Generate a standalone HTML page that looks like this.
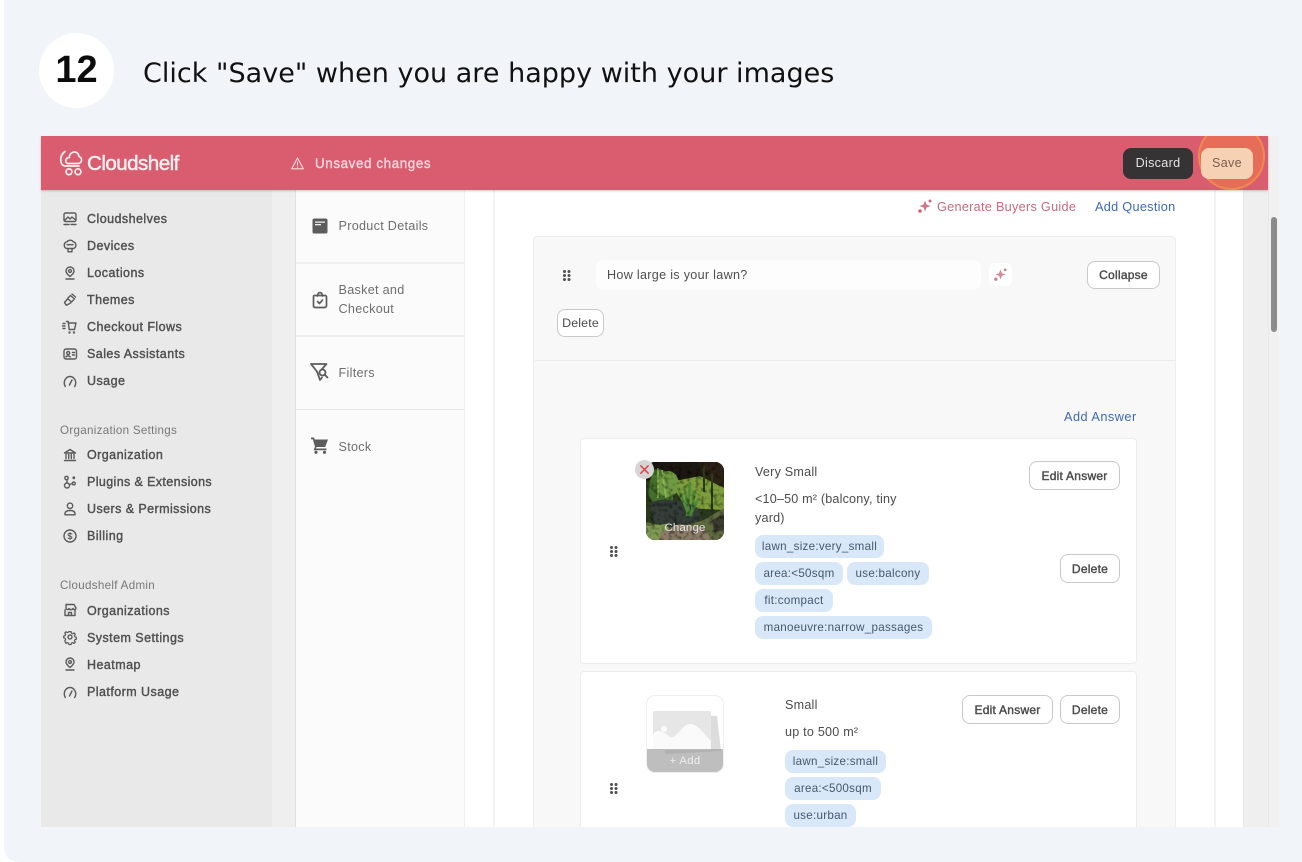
<!DOCTYPE html>
<html><head><meta charset="utf-8"><style>
*{box-sizing:border-box}
html,body{margin:0;padding:0;width:1302px;height:862px;overflow:hidden;background:#fff;font-family:"Liberation Sans",sans-serif}
.a{position:absolute}
.t{position:absolute;white-space:nowrap;font-size:12.6px;line-height:16px;letter-spacing:.25px;color:#4a4a4a}
.nav{font-weight:400;color:#505050;font-size:12.5px;letter-spacing:.45px;left:87px;-webkit-text-stroke:.4px #505050}
.lab{left:60px;color:#777;font-size:11.6px;letter-spacing:.3px}
.sub{left:338.5px;color:#6e6e6e;font-size:12.6px;letter-spacing:.3px}
.btn{position:absolute;background:#fff;border:1px solid #c9c9c9;border-radius:8px;font-size:12px;font-weight:400;-webkit-text-stroke:.4px #4a4a4a;color:#4a4a4a;text-align:center;letter-spacing:.25px}
.tag{position:absolute;height:23px;background:#d8e8f8;border-radius:8px;font-size:11.6px;line-height:24px;color:#46586e;text-align:center;letter-spacing:.28px;white-space:nowrap}
svg{position:absolute;overflow:visible}
.ic{fill:none;stroke:#5a5a5a;stroke-width:1.4;stroke-linecap:round;stroke-linejoin:round}
.dots{position:absolute;width:8px;height:11px;background-image:radial-gradient(circle at 1.5px 1.5px,#555 1.4px,transparent 1.7px);background-size:4.5px 4px}
#w{position:absolute;left:0;top:0;width:1302px;height:862px;filter:blur(.35px)}
</style></head><body>
<div class="a" style="left:4px;top:-12px;width:1310px;height:874px;background:#f1f5fa;border-radius:14px"></div>

<div class="a" style="left:39px;top:33px;width:75px;height:75px;border-radius:50%;background:#fff"></div>
<div class="t" style="left:39px;width:75px;text-align:center;top:47px;font-weight:700;font-size:38px;line-height:46px;color:#0c0c0c;letter-spacing:0">12</div>
<div class="t" style="left:143px;top:55px;font-family:'DejaVu Sans',sans-serif;font-size:27px;line-height:38px;color:#111;letter-spacing:.02px">Click "Save" when you are happy with your images</div>

<div id="w">
<!-- app frame -->
<div class="a" style="left:41px;top:190px;width:231px;height:637px;background:#e9e9e9"></div>
<div class="a" style="left:272px;top:190px;width:23px;height:637px;background:#efefef"></div>
<div class="a" style="left:295px;top:190px;width:170px;height:637px;background:#fbfbfb;border-left:1px solid #e2e2e2;border-right:1px solid #f0f0f0"></div>
<div class="a" style="left:465px;top:190px;width:28px;height:637px;background:#fff"></div>
<div class="a" style="left:493px;top:190px;width:723px;height:637px;background:#fff;border-left:2px solid #f3f3f3;border-right:2px solid #f3f3f3"></div>
<div class="a" style="left:1216px;top:190px;width:27px;height:637px;background:#fff"></div>
<div class="a" style="left:1243px;top:190px;width:25px;height:637px;background:#efefef;border-left:1px solid #e8e8e8"></div>
<div class="a" style="left:1268px;top:136px;width:11px;height:691px;background:#f1f1f1;border-left:1px solid #e8e8e8"></div>
<div class="a" style="left:1271px;top:217px;width:6px;height:115px;border-radius:3px;background:#8c8c8c"></div>

<!-- header -->
<div class="a" style="left:41px;top:136px;width:1227px;height:54px;background:#d95c6f;box-shadow:0 1px 2px rgba(120,60,70,.3)"></div>
<svg style="left:60px;top:150px" width="24" height="26" viewBox="0 0 24 26" fill="none" stroke="#fbeef0" stroke-width="1.7" stroke-linecap="round" stroke-linejoin="round">
<path d="M5 1.500C1.500 4 .2 8 1 12c.5 2.400 2 3.800 4 4h14"/>
<path d="M7.500 13.500h10.500c4 0 5-5.500 1-7C18.500 3 15.500 1 12.500 2.500 10 3.500 9 6 9.500 7.500 5.500 7.500 4.500 12.500 7.500 13.500Z"/>
<circle cx="9" cy="21.800" r="2.900"/><circle cx="18" cy="21.800" r="2.900"/></svg>
<div class="t" style="left:87px;top:151px;font-size:20.6px;line-height:26px;color:#fbf0f1;font-weight:400;letter-spacing:-.55px;-webkit-text-stroke:.45px #fbf0f1">Cloudshelf</div>
<svg style="left:291px;top:157px" width="13" height="13" viewBox="0 0 13 13" fill="none" stroke="#f7dde0" stroke-width="1.100" stroke-linejoin="round" stroke-linecap="round"><path d="M6.500 1 12.300 11.800H.7ZM6.500 5v3.300M6.500 10v.2"/></svg>
<div class="t" style="left:315px;top:156px;color:#f5d5da;font-weight:400;-webkit-text-stroke:.4px #f5d5da;font-size:13.4px;letter-spacing:.6px">Unsaved changes</div>
<div class="a" style="left:1123px;top:148px;width:70px;height:31px;border-radius:8px;background:#353333;color:#e4e4e4;font-size:12.6px;line-height:31px;text-align:center;letter-spacing:.3px">Discard</div>
<div class="a" style="left:1196px;top:136px;width:72px;height:55px;overflow:hidden"><div class="a" style="left:2px;top:-13px;width:67px;height:67px;border-radius:50%;background:#e76d58;border:2px solid #ee8a50"></div></div>
<div class="a" style="left:1201px;top:148px;width:52px;height:31px;border-radius:8px;background:#f7d1b3;color:#7b5f4c;font-size:12.6px;line-height:31px;text-align:center;letter-spacing:.3px">Save</div>

<!-- sidebar -->
<svg class="ic" style="left:63px;top:212px" width="14" height="14" viewBox="0 0 14 14"><rect x="1" y="1" width="12" height="8.500" rx="1.500"/><path d="M2 8l3-3 2 2 2-2 3 2.500M1 12.500h5M8 12.500h5"/></svg>
<div class="t nav" style="top:211px">Cloudshelves</div>
<svg class="ic" style="left:63px;top:239px" width="14" height="14" viewBox="0 0 14 14"><path d="M3.500 9.500C.5 8.500.3 3.500 4 2.800 5.500.7 9 .7 10.200 2.800c3.600.7 3.400 5.700.4 6.700ZM4 5.500c1 1 2 0 3 0s2 1 3 0M5 9.500v3.300h4V9.500"/></svg>
<div class="t nav" style="top:238px">Devices</div>
<svg class="ic" style="left:63px;top:266px" width="14" height="14" viewBox="0 0 14 14"><path d="M7 10.500C4.500 8.500 3 6.800 3 5a4 4 0 0 1 8 0c0 1.800-1.500 3.500-4 5.500ZM3 13h8"/><circle cx="7" cy="5" r="1.400"/></svg>
<div class="t nav" style="top:265px">Locations</div>
<svg class="ic" style="left:63px;top:293px" width="14" height="14" viewBox="0 0 14 14"><path d="M7.500 2.500l4 3.500-3 3-4-3.500ZM4.500 6l-3 3.500 1.800 2.700 3.500-1.700 1.700-1.500M9 1l3.500 3"/></svg>
<div class="t nav" style="top:292px">Themes</div>
<svg class="ic" style="left:62px;top:320px" width="15" height="14" viewBox="0 0 15 14"><path d="M4.500 1.500h1.700l1 8h5.300l1.500-6.500H6.500M1 3.500h2M.5 6h2.500M1 8.500h2"/><circle cx="7.500" cy="12.500" r=".5"/><circle cx="12" cy="12.500" r=".5"/></svg>
<div class="t nav" style="top:319px">Checkout Flows</div>
<svg class="ic" style="left:63px;top:347px" width="14" height="14" viewBox="0 0 14 14"><rect x="1" y="2" width="12.500" height="10" rx="2"/><circle cx="5.200" cy="6" r="1.500"/><path d="M3 10c.5-1.500 3.500-1.500 4.200 0M9.500 5.500H11.500M9.500 8H11.500"/></svg>
<div class="t nav" style="top:346px">Sales Assistants</div>
<svg class="ic" style="left:63px;top:374px" width="14" height="14" viewBox="0 0 14 14"><path d="M2.300 12.500C-.5 7.500 3 2.500 7 2.500s7.500 5 4.700 10M6.500 11 9 6"/></svg>
<div class="t nav" style="top:373px">Usage</div>

<div class="t lab" style="top:423px">Organization Settings</div>
<svg class="ic" style="left:63px;top:448px" width="14" height="14" viewBox="0 0 14 14"><path d="M1.500 5 7 1.500 12.500 5ZM3 6.500v4M5.700 6.500v4M8.300 6.500v4M11 6.500v4M1.500 12.500h11"/></svg>
<div class="t nav" style="top:447px">Organization</div>
<svg class="ic" style="left:63px;top:475px" width="14" height="14" viewBox="0 0 14 14"><circle cx="3.500" cy="3" r="1.700"/><circle cx="4" cy="10.500" r="2.500"/><circle cx="10.800" cy="8.500" r="1.500"/><circle cx="10.800" cy="2.800" r=".7"/><path d="M4 5v3M6.500 9.500l3-1"/></svg>
<div class="t nav" style="top:474px;letter-spacing:.38px">Plugins &amp; Extensions</div>
<svg class="ic" style="left:63px;top:502px" width="14" height="14" viewBox="0 0 14 14"><circle cx="7" cy="3.800" r="2.700"/><path d="M2 12.800v-1C2 9.500 4 8.500 7 8.500s5 1 5 3.300v1Z"/></svg>
<div class="t nav" style="top:501px;letter-spacing:.43px">Users &amp; Permissions</div>
<svg class="ic" style="left:63px;top:529px" width="14" height="14" viewBox="0 0 14 14"><circle cx="7" cy="7" r="6"/><path d="M9 5.200C8.500 4 5 4 5 5.800s4 1 4 2.700-3.700 1.500-4 .2M7 3.500v7" stroke-width="1"/></svg>
<div class="t nav" style="top:528px">Billing</div>

<div class="t lab" style="top:578px">Cloudshelf Admin</div>
<svg class="ic" style="left:63px;top:603px" width="14" height="14" viewBox="0 0 14 14"><path d="M3 1.500h8l2 3.500c0 2-2.500 2-3 .5-.5 1.500-3.500 1.500-4 0-.5 1.500-3 1.500-3-.5ZM2 7v5.500h10V7M5.500 12.500V9.500h3v3"/></svg>
<div class="t nav" style="top:603px">Organizations</div>
<svg class="ic" style="left:63px;top:630px" width="14" height="14" viewBox="0 0 14 14"><circle cx="7" cy="7" r="2"/><path d="M5.800.8h2.400l.4 1.800 1.500.7 1.600-1 1.400 1.600-1 1.500.6 1.500 1.600.5v2.200l-1.600.4-.6 1.500 1 1.500-1.500 1.400-1.500-1-1.500.7-.4 1.600H5.800l-.4-1.600-1.500-.7-1.500 1L1 11.500l1-1.500-.6-1.500L-.2 8V5.900l1.600-.5.6-1.500-1-1.500L2.400 1l1.600 1 1.400-.7Z" transform="translate(.9 .9) scale(.87)"/></svg>
<div class="t nav" style="top:630px">System Settings</div>
<svg class="ic" style="left:63px;top:657px" width="14" height="14" viewBox="0 0 14 14"><path d="M7 10.500C4.500 8.500 3 6.800 3 5a4 4 0 0 1 8 0c0 1.800-1.500 3.500-4 5.500ZM3 13h8"/><circle cx="7" cy="5" r="1.400"/></svg>
<div class="t nav" style="top:657px">Heatmap</div>
<svg class="ic" style="left:63px;top:685px" width="14" height="14" viewBox="0 0 14 14"><path d="M2.300 12.500C-.5 7.500 3 2.500 7 2.500s7.500 5 4.700 10M6.500 11 9 6"/></svg>
<div class="t nav" style="top:684px">Platform Usage</div>

<!-- secondary nav -->
<div class="a" style="left:296px;top:262px;width:168px;height:2px;background:#f0f0f0"></div>
<div class="a" style="left:296px;top:335px;width:168px;height:2px;background:#f0f0f0"></div>
<div class="a" style="left:296px;top:409px;width:168px;height:1px;background:#e8e8e8"></div>
<svg style="left:312px;top:218px" width="16" height="16" viewBox="0 0 16 16"><rect x=".5" y=".5" width="15" height="15" rx="1.800" fill="#5c5c5c"/><rect x="3" y="3.500" width="10" height="1.300" fill="#eee"/><rect x="3" y="6" width="6" height="1.300" fill="#eee"/></svg>
<div class="t sub" style="top:218px">Product Details</div>
<svg style="left:312px;top:291px" width="16" height="18" viewBox="0 0 16 18" fill="none" stroke="#5c5c5c" stroke-width="1.700" stroke-linejoin="round" stroke-linecap="round"><path d="M2.500 4.500h11a1.500 1.500 0 0 1 1 1.300v9a1.800 1.800 0 0 1-1.800 1.700H3.200a1.800 1.800 0 0 1-1.700-1.700v-9c0-.7.400-1.300 1-1.300ZM5.500 5c0-4.500 5-4.500 5 0M5.500 10.500l2 2 3-3.500"/></svg>
<div class="t sub" style="top:282px">Basket and</div>
<div class="t sub" style="top:301px">Checkout</div>
<svg style="left:310px;top:363px" width="19" height="18" viewBox="0 0 19 18" fill="none" stroke="#5c5c5c" stroke-width="1.800" stroke-linejoin="round" stroke-linecap="round"><path d="M1 1h15.500L12 6M1 1l6 7.500 3 8.500 2-2.500"/><circle cx="12.500" cy="9.500" r="3"/><path d="M15 12l2.500 2.500"/></svg>
<div class="t sub" style="top:365px">Filters</div>
<svg style="left:311px;top:437px" width="17" height="17" viewBox="0 0 17 17"><path fill="#5c5c5c" d="M0 .5h3l.8 2H17l-2.800 7.500H5.500L5 11.500h10.500V13.300H2.500L4 9.800 1.800 2.300H0Z"/><circle cx="5" cy="15.300" r="1.600" fill="#5c5c5c"/><circle cx="13.500" cy="15.300" r="1.600" fill="#5c5c5c"/></svg>
<div class="t sub" style="top:439px">Stock</div>

<!-- top actions -->
<svg style="left:918px;top:199px" width="14" height="14" viewBox="0 0 14 14" fill="#c8687a"><path d="M7 1.500l1.500 4 4 1.500-4 1.500L7 12.500 5.500 8.500l-4-1.500 4-1.500Z" opacity=".9"/><circle cx="12" cy="2" r="1.500"/><circle cx="2" cy="12" r="1.800"/></svg>
<div class="t" style="left:937px;top:199px;color:#c76a7c;font-size:12.7px;letter-spacing:.28px">Generate Buyers Guide</div>
<div class="t" style="left:1095px;top:199px;color:#3e68ae;font-size:12.7px;letter-spacing:.3px">Add Question</div>

<!-- question panel -->
<div class="a" style="left:533px;top:236px;width:643px;height:600px;background:#f8f8f8;border:1px solid #eee;border-radius:4px"></div>
<div class="a" style="left:534px;top:360px;width:641px;height:1px;background:#ececec"></div>
<div class="dots" style="left:563px;top:270px"></div>
<div class="a" style="left:596px;top:260px;width:385px;height:30px;border-radius:8px;background:#fdfdfd"></div>
<div class="t" style="left:607px;top:267px;font-size:12.6px;letter-spacing:.3px;color:#4f4f4f">How large is your lawn?</div>
<div class="a" style="left:989px;top:263px;width:23px;height:23px;border-radius:6px;background:#fff"></div>
<svg style="left:994px;top:268px" width="13" height="13" viewBox="0 0 14 14" fill="#cf7e8c"><path d="M7 1.500l1.500 4 4 1.500-4 1.500L7 12.500 5.500 8.500l-4-1.500 4-1.500Z" opacity=".9"/><circle cx="12" cy="2" r="1.500"/><circle cx="2" cy="12" r="1.800"/></svg>
<div class="btn" style="left:1087px;top:261px;width:73px;height:28px;line-height:27px">Collapse</div>
<div class="btn" style="left:557px;top:309px;width:47px;height:28px;line-height:26px;font-size:12.4px;letter-spacing:.15px;-webkit-text-stroke:0">Delete</div>
<div class="t" style="left:1064px;top:409px;color:#3e68ae;font-size:12.7px;letter-spacing:.5px">Add Answer</div>

<!-- answer 1 -->
<div class="a" style="left:580px;top:438px;width:557px;height:226px;background:#fff;border:1px solid #ececec;border-radius:4px"></div>
<div class="dots" style="left:610px;top:546px"></div>
<svg style="left:646px;top:462px" width="78" height="78" viewBox="0 0 78 78">
<defs><clipPath id="c"><rect width="78" height="78" rx="9"/></clipPath>
<filter id="n" x="0" y="0" width="100%" height="100%"><feTurbulence type="fractalNoise" baseFrequency=".22" numOctaves="2" seed="4"/><feColorMatrix values="0 0 0 0 0 0 0 0 0 0 0 0 0 0 0 0 0 0 1.300 -.6"/></filter></defs>
<g clip-path="url(#c)">
<rect width="78" height="78" fill="#2b3a1c"/>
<rect width="78" height="18" fill="#1c1710"/>
<path d="M52 0h26v24H60Z" fill="#2b2115"/>
<path d="M24 20 54 14 78 26V48L40 46Z" fill="#7f9f3c"/>
<path d="M6 8C22 4 28 16 27 38L10 46 2 32Z" fill="#47702c"/>
<ellipse cx="22" cy="22" rx="11" ry="13" fill="#6f9a42"/>
<path d="M4 42C12 34 38 38 52 46L56 58 30 66 8 60Z" fill="#343d38"/>
<path d="M0 60 30 66 58 58 78 46V78H0Z" fill="#5f6a40"/>
<path d="M0 64 20 62 30 78H0Z" fill="#7f9a52"/>
<path d="M14 70 34 62 58 66 66 78H14Z" fill="#8b7c66"/>
<path d="M66 58 78 52V68L68 70Z" fill="#3b3a2e"/>
<path d="M38 24l6 30M44 20l-3 34M34 30l9 24M49 28l-4 26M53 36l-9 18" stroke="#4f8a3a" stroke-width="2.600" fill="none"/>
<path d="M66 12v36M58 4v26" stroke="#2d3d1a" stroke-width="2"/>
<path d="M12 6v30M16 8l4 28" stroke="#8bbd55" stroke-width="1.500"/>
<rect width="78" height="78" filter="url(#n)"/>
</g></svg>
<div class="t" style="left:646px;width:78px;text-align:center;top:520px;font-size:11.4px;color:#e8e8e8;letter-spacing:.2px">Change</div>
<div class="a" style="left:635px;top:460px;width:19px;height:19px;border-radius:50%;background:#d5d5d5"></div>
<svg style="left:640px;top:465px" width="9" height="9" viewBox="0 0 9 9" stroke="#dd4a4a" stroke-width="1.500" stroke-linecap="round"><path d="M.8.800l7.400 7.400M8.200.800.8 8.200"/></svg>

<div class="t" style="left:755px;top:464px;letter-spacing:.22px;color:#4c4c4c">Very Small</div>
<div class="t" style="left:755px;top:491px;letter-spacing:.18px;color:#4c4c4c">&lt;10–50 m² (balcony, tiny</div>
<div class="t" style="left:755px;top:510px;letter-spacing:.2px;color:#4c4c4c">yard)</div>
<div class="tag" style="left:755px;top:535px;width:129px">lawn_size:very_small</div>
<div class="tag" style="left:755px;top:562px;width:88px">area:&lt;50sqm</div>
<div class="tag" style="left:847px;top:562px;width:82px">use:balcony</div>
<div class="tag" style="left:755px;top:589px;width:78px">fit:compact</div>
<div class="tag" style="left:755px;top:616px;width:177px">manoeuvre:narrow_passages</div>
<div class="btn" style="left:1029px;top:461px;width:91px;height:29px;line-height:28px">Edit Answer</div>
<div class="btn" style="left:1060px;top:554px;width:60px;height:29px;line-height:28px">Delete</div>

<!-- answer 2 -->
<div class="a" style="left:580px;top:671px;width:557px;height:165px;background:#fff;border:1px solid #ececec;border-radius:4px"></div>
<div class="dots" style="left:610px;top:783px"></div>
<div class="a" style="left:646px;top:695px;width:78px;height:78px;border:1px solid #eee;border-radius:9px;background:#fff;overflow:hidden">
<svg style="left:6px;top:15px" width="68" height="48" viewBox="0 0 68 48"><path d="M8 2 64 5 68 40 12 43Z" fill="#dcdcdc"/><rect x="0" y="0" width="58" height="39" rx="2" fill="#e6e6e6"/><path d="M0 30V24c4-8 12-2 17 2 6 3 12-13 20-13 8 0 14 10 21 17v9H0Z" fill="#fafafa"/><circle cx="11" cy="18" r="3" fill="#fafafa"/></svg>
<div class="a" style="left:0;top:53px;width:78px;height:24px;background:rgba(150,150,150,.62)"></div>
<div class="t" style="left:0;width:76px;text-align:center;top:57px;font-size:11.4px;color:#eee;letter-spacing:.3px">+ Add</div>
</div>
<div class="t" style="left:785px;top:697px;letter-spacing:.22px;color:#4c4c4c">Small</div>
<div class="t" style="left:785px;top:724px;letter-spacing:.22px;color:#4c4c4c">up to 500 m²</div>
<div class="tag" style="left:785px;top:750px;width:101px">lawn_size:small</div>
<div class="tag" style="left:785px;top:777px;width:96px">area:&lt;500sqm</div>
<div class="tag" style="left:785px;top:804px;width:71px">use:urban</div>
<div class="btn" style="left:962px;top:695px;width:91px;height:29px;line-height:28px">Edit Answer</div>
<div class="btn" style="left:1060px;top:695px;width:60px;height:29px;line-height:28px">Delete</div>

<!-- cover anything below the frame -->
<div class="a" style="left:41px;top:827px;width:1261px;height:35px;background:#f1f5fa"></div>
</div>
</body></html>
